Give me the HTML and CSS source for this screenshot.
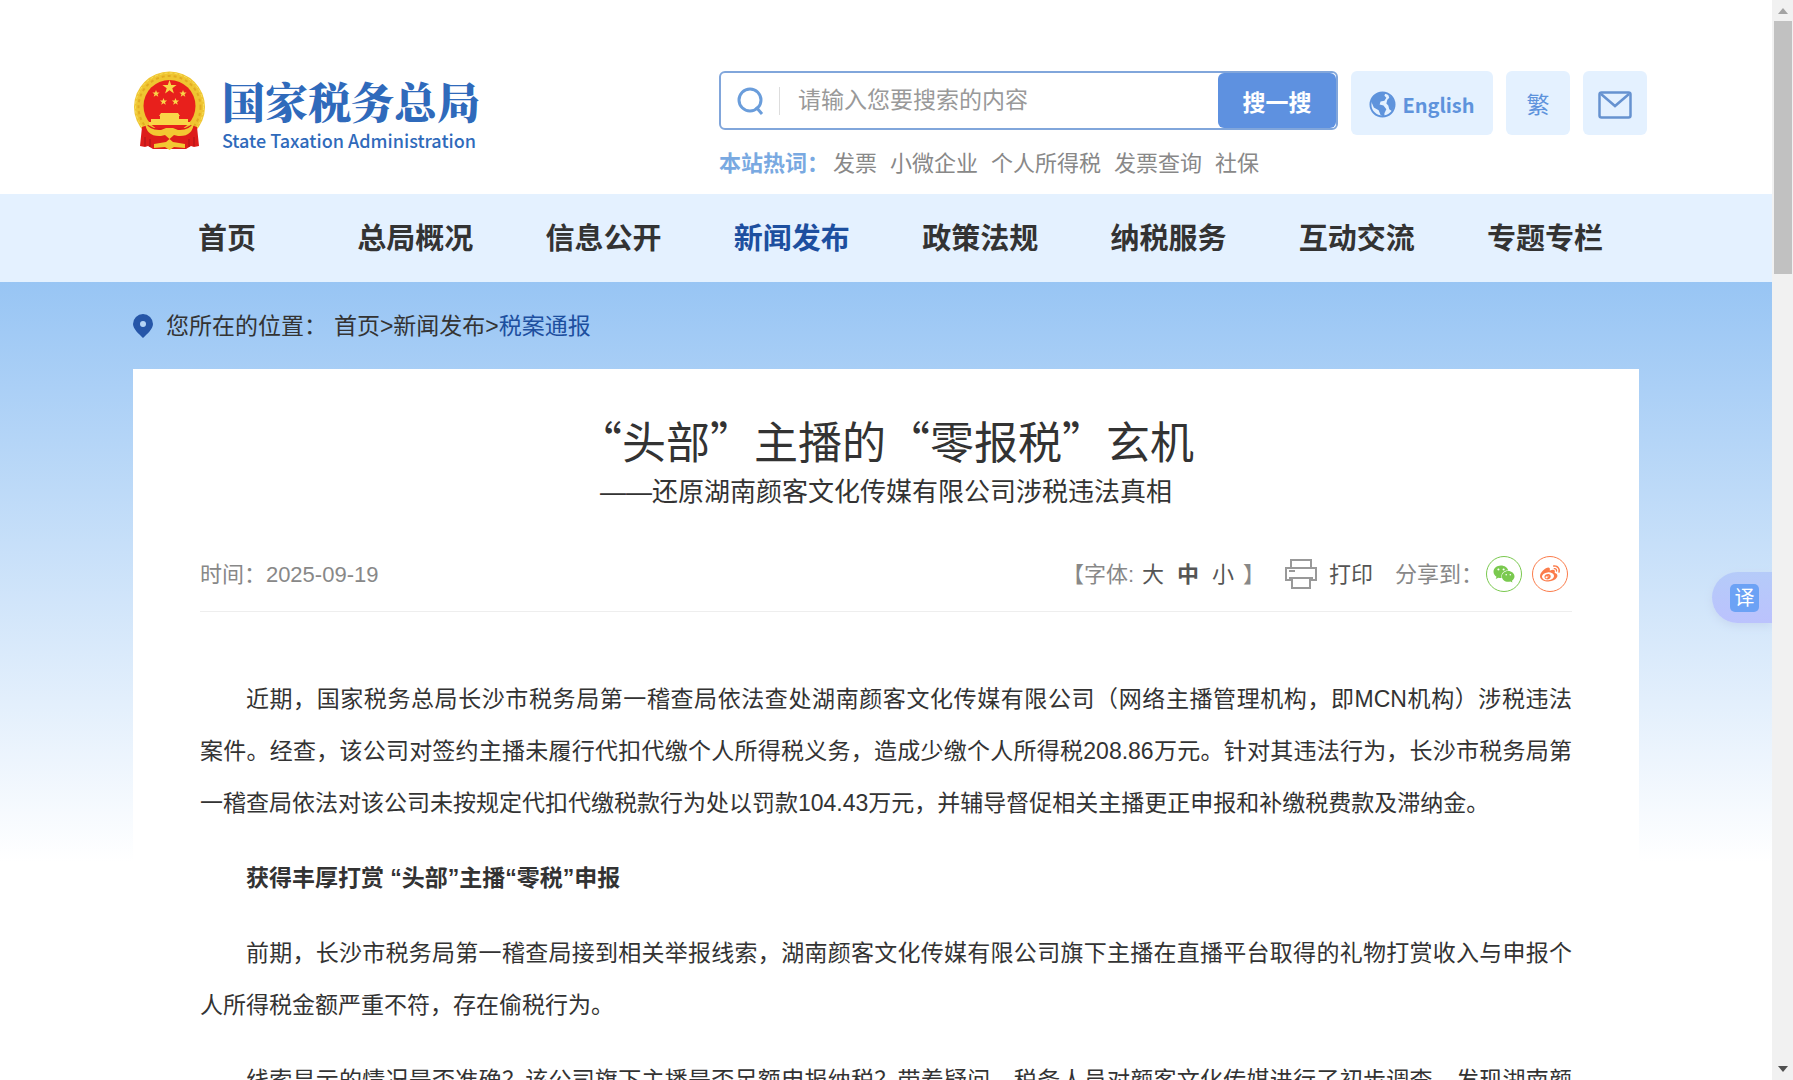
FILE: index.html
```html
<!DOCTYPE html>
<html lang="zh-CN">
<head>
    <meta charset="UTF-8">
    <meta name="viewport" content="width=device-width, initial-scale=1.0">
    <title>“头部”主播的“零报税”玄机</title>
    <link rel="stylesheet" href="styles.css">
</head>
<body>
    <header class="header">
        <a class="logo" href="#">
            <svg class="emblem" viewBox="0 0 73 79" aria-hidden="true">
                <circle cx="36.5" cy="36" r="35.5" fill="#efc531"/>
                <circle cx="36.5" cy="36" r="31" fill="none" stroke="#e2aa22" stroke-width="2" stroke-dasharray="3 3"/>
                <circle cx="36.5" cy="36" r="34" fill="none" stroke="#f8df5e" stroke-width="1" stroke-dasharray="3 2"/>
                <circle cx="36.5" cy="35" r="26" fill="#e8201c"/>
                <g fill="#f9d648">
                    <path d="M36.5 9l1.7 5.1h5.4l-4.3 3.2 1.6 5.2-4.4-3.2-4.4 3.2 1.6-5.2-4.3-3.2h5.4z"/>
                    <path d="M23 19l1 2.6h2.6l-2.1 1.6.8 2.6-2.3-1.6-2.3 1.6.8-2.6-2.1-1.600H22z"/>
                    <path d="M50 19l1 2.600h2.600l-2.100 1.600.8 2.600-2.300-1.600-2.300 1.600.8-2.600-2.100-1.600H49z"/>
                    <path d="M30.500 27l1 2.600h2.600l-2.100 1.600.8 2.600-2.300-1.600-2.300 1.600.8-2.600-2.100-1.600h2.600z"/>
                    <path d="M42.500 27l1 2.600h2.600l-2.100 1.600.8 2.600-2.300-1.600-2.300 1.600.8-2.600-2.100-1.600h2.600z"/>
                    <path d="M28 42h17l2 3h-1v3h9v3h2v3H16v-3h2v-3h9v-3h-1z"/>
                </g>
                <path d="M9 56l6-2 6 3h31l6-3 6 2 2 19-5 1-3-1-5 3H20l-5-3-3 1-5-1z" fill="#dd1c1a"/>
                <path d="M12 51q5 9 16 8l5-2h7l5 2q11 1 16-8-1 15-16 14l-4-1-4.500 4-4.500-4-4 1q-15 1-16-14z" fill="#f2c832"/>
                <path d="M21 73l12-2 3.500-3 3.500 3 12 2v4l-11-1-4.500 3-4.500-3-11 1z" fill="#f2c832"/>
                <path d="M12 66v9M17 68v8M56 68v8M61 66v9" stroke="#a91218" fill="none"/>
            </svg>
            <span class="logo-text">
                <span class="logo-cn">国家税务总局</span>
                <span class="logo-en">State Taxation Administration</span>
            </span>
        </a>
        <div class="search-area">
            <form class="search" onsubmit="return false">
                <svg class="search-icon" viewBox="0 0 28 28" aria-hidden="true">
                    <circle cx="13" cy="13" r="11" fill="none" stroke="#6a9ddb" stroke-width="3"/>
                    <path d="M19 20l6 7" stroke="#6a9ddb" stroke-width="3"/>
                </svg>
                <input class="search-input" type="text" placeholder="请输入您要搜索的内容" aria-label="搜索">
                <button class="search-button" type="submit">搜一搜</button>
            </form>
            <div class="hot">
                <strong>本站热词：</strong>
                <a href="#">发票</a>
                <a href="#">小微企业</a>
                <a href="#">个人所得税</a>
                <a href="#">发票查询</a>
                <a href="#">社保</a>
            </div>
        </div>
        <div class="tools">
            <a class="tool tool-english" href="#">
                <svg class="globe" viewBox="0 0 28 28" aria-hidden="true">
                    <circle cx="14" cy="14" r="12.5" fill="none" stroke="#5e93dc" stroke-width="2"/>
                    <path d="M2 10l4-6 6-3 5 1-1 3 2 2-2 3-4 1-1 3 4 1 3 4-2 4v4l-4-2-2-5-5-3z" fill="#5e93dc"/>
                    <path d="M20 4l4 3 3 7-3 7-3-2-1-4-2-2 1-4 2-2z" fill="#5e93dc"/>
                </svg>
                English
            </a>
            <a class="tool" href="#">繁</a>
            <a class="tool" href="#" aria-label="邮箱">
                <svg class="mail" viewBox="0 0 34 28" aria-hidden="true">
                    <rect x="1.5" y="1.5" width="31" height="25" rx="2" fill="none" stroke="#6692d0" stroke-width="2.5"/>
                    <path d="M3 3l14 12L31 3" fill="none" stroke="#6692d0" stroke-width="2.5"/>
                </svg>
            </a>
        </div>
    </header>

    <nav class="nav">
        <div class="nav-list">
            <a href="#">首页</a>
            <a href="#">总局概况</a>
            <a href="#">信息公开</a>
            <a class="active" href="#">新闻发布</a>
            <a href="#">政策法规</a>
            <a href="#">纳税服务</a>
            <a href="#">互动交流</a>
            <a href="#">专题专栏</a>
        </div>
    </nav>

    <main class="main">
        <div class="breadcrumb">
            <svg class="pin" viewBox="0 0 20 24" aria-hidden="true">
                <path d="M10 0a10 10 0 0 1 10 10c0 5-6 10-10 14C6 20 0 15 0 10A10 10 0 0 1 10 0z" fill="#2656a8"/>
                <circle cx="10" cy="10" r="3" fill="#b5d3f5"/>
            </svg>
            <span class="breadcrumb-label">您所在的位置：</span>
            <span><a href="#">首页</a>&gt;<a href="#">新闻发布</a>&gt;<a class="current" href="#">税案通报</a></span>
        </div>

        <article class="article">
            <h1>“头部”主播的“零报税”玄机</h1>
            <p class="subtitle">——还原湖南颜客文化传媒有限公司涉税违法真相</p>

            <div class="meta">
                <span class="date">时间：2025-09-19</span>
                <div class="font-size">
                    <span>【字体:</span>
                    <button type="button">大</button>
                    <button class="selected" type="button">中</button>
                    <button type="button">小</button>
                    <span>】</span>
                </div>
                <button class="print" type="button">
                    <svg class="printer" viewBox="0 0 32 30" aria-hidden="true">
                        <g fill="none" stroke="#999" stroke-width="2">
                            <path d="M6 9V1h20v8"/>
                            <path d="M6 21H1V9h30v12h-5"/>
                            <path d="M4 12h6"/>
                            <path d="M4 19h24M7 19v10h18V19"/>
                        </g>
                    </svg>
                    <span>打印</span>
                </button>
                <span class="share-label">分享到：</span>
                <a class="share wechat" href="#" aria-label="微信">
                    <svg viewBox="0 0 576 512" aria-hidden="true"><path fill="currentColor" d="M385.200 167.600c6.400 0 12.600.3 18.800 1.100C387.400 90.300 303.300 32 207.700 32 100.500 32 13 104.800 13 197.400c0 53.400 29.300 97.500 77.900 131.600l-19.300 58.600 68-34.100c24.400 4.800 43.800 9.700 68.200 9.700 6.200 0 12.100-.3 18.300-.8-4-12.900-6.200-26.600-6.200-40.800-.1-84.900 72.900-154 165.300-154zm-104.500-52.900c14.500 0 24.200 9.700 24.200 24.400 0 14.500-9.700 24.200-24.200 24.200-14.800 0-29.300-9.700-29.300-24.200.1-14.700 14.600-24.400 29.300-24.400zm-136.400 48.600c-14.500 0-29.300-9.700-29.300-24.200 0-14.800 14.800-24.400 29.300-24.400 14.800 0 24.400 9.700 24.400 24.400 0 14.600-9.600 24.200-24.400 24.200zM563 319.400c0-77.900-77.900-141.300-165.400-141.300-92.700 0-165.400 63.400-165.400 141.300S305 460.700 397.600 460.700c19.300 0 38.900-5.100 58.600-9.900l53.400 29.300-14.800-48.600C534 402.100 563 363.200 563 319.400zm-219.100-24.500c-9.500 0-19.300-9.700-19.300-19.600 0-9.700 9.800-19.300 19.300-19.300 14.800 0 24.400 9.700 24.400 19.300 0 10-9.700 19.600-24.400 19.600zm107.100 0c-9.500 0-19.300-9.700-19.300-19.600 0-9.700 9.800-19.300 19.300-19.300 14.500 0 24.400 9.700 24.400 19.300.1 10-9.900 19.600-24.400 19.600z"/></svg>
                </a>
                <a class="share weibo" href="#" aria-label="微博">
                    <svg viewBox="0 0 512 512" aria-hidden="true"><path fill="currentColor" d="M407 177.600c7.600-24-13.400-46.800-37.400-41.700-22 4.800-28.800-28.100-7.100-32.800 50.100-10.900 92.300 37.100 76.500 84.800-6.800 21.200-38.800 10.800-32-10.300zM214.800 446.700C108.500 446.700 0 395.300 0 310.400c0-44.300 28-95.400 76.300-143.700C176 67 279.500 65.800 249.900 161c-4 13.100 12.300 5.700 12.300 6 79.500-33.600 140.500-16.800 114 51.400-3.700 9.400 1.100 10.900 8.300 13.100 135.700 42.300 34.800 215.200-169.700 215.200zm143.700-146.300c-5.400-55.700-78.500-94-163.400-85.700-84.800 8.600-148.800 60.300-143.400 116s78.500 94 163.400 85.700c84.800-8.600 148.800-60.300 143.400-116zM347.900 35.100c-25.900 5.600-16.800 43.700 8.300 38.300 72.300-15.200 134.800 52.800 111.700 124-7.400 24.200 29.100 37 37.400 12 31.900-99.800-55.100-195.900-157.400-174.300zm-78.500 311c-17.100 38.800-66.800 60-109.100 46.300-40.800-13.100-58-53.400-40.300-89.700 17.700-35.400 63.100-55.400 103.400-45.100 42 10.800 63.100 50.200 46 88.500zm-86.300-30c-12.900-5.400-30 .3-38 12.900-8.300 12.900-4.300 28 8.600 34 13.100 6 30.800.3 39.100-12.900 8-13.100 3.700-28.300-9.700-34zm32.600-13.400c-5.100-1.700-11.400.6-14.300 5.400-2.900 5.100-1.400 10.600 3.700 12.900 5.100 2 11.700-.3 14.600-5.400 2.800-5.200 1.100-10.900-4-12.900z"/></svg>
                </a>
            </div>

            <div class="content">
                <p>近期，国家税务总局长沙市税务局第一稽查局依法查处湖南颜客文化传媒有限公司（网络主播管理机构，即MCN机构）涉税违法<span class="nowrap">案件。</span>经查，该公司对签约主播未履行代扣代缴个人所得税义务，造成少缴个人所得税208.86万元。针对其违法行为，长沙市税务局第一稽查局依法对该公司未按规定代扣代缴税款行为处以罚款104.43万元，并辅导督促相关主播更正申报和补缴税费款及滞纳金。</p>
                <p><strong>获得丰厚打赏 “头部”主播“零税”申报</strong></p>
                <p>前期，长沙市税务局第一稽查局接到相关举报线索，湖南颜客文化传媒有限公司旗下主播在直播平台取得的礼物打赏收入与申报个人所得税金额严重不符，存在偷税行为。</p>
                <p class="full-line">线索显示的情况是否准确？该公司旗下主播是否足额申报纳税？带着疑问，税务人员对颜客文化传媒进行了初步调查，发现湖南颜</p>
            </div>
        </article>
    </main>

    <button class="translate" type="button"><span>译</span></button>

    <div class="scrollbar" aria-hidden="true">
        <svg viewBox="0 0 10 6"><path d="M0 6l5-6 5 6z" fill="#a3a3a3"/></svg>
        <div class="thumb"></div>
        <svg viewBox="0 0 10 6"><path d="M0 0l5 6 5-6z" fill="#505050"/></svg>
    </div>
</body>
</html>
```
FILE: styles.css
```css
/* General Styling */
* {
    box-sizing: border-box;
}

body {
    margin: 0;
    padding-right: 21px;
    height: 100vh;
    overflow: hidden;
    font-family: "Liberation Sans", "Noto Sans CJK SC", sans-serif;
    font-size: 22px;
    color: #333;
    background: #fff;
    text-spacing-trim: space-all;
}

a {
    color: inherit;
    text-decoration: none;
}

button {
    padding: 0;
    border: none;
    background: none;
    font: inherit;
    color: inherit;
    cursor: pointer;
}

/* Header */
.header {
    display: flex;
    align-items: flex-start;
    height: 194px;
    margin: 0 7% 0 7.5%;
    padding-top: 71px;
}

.logo {
    display: flex;
    gap: 16px;
    flex: 0 0 586px;
    color: #2f6abb;
}

.emblem {
    width: 73px;
    height: 79px;
}

.logo-text {
    display: flex;
    flex-direction: column;
}

.logo-cn {
    font-family: "Noto Serif CJK SC", "Noto Sans CJK SC", serif;
    font-size: 43px;
    font-weight: 900;
    line-height: 60px;
}

.logo-en {
    font-family: "Noto Sans CJK SC", sans-serif;
    font-size: 18px;
    font-weight: 500;
    line-height: 18px;
}

.search-area {
    flex: 1;
}

.search {
    display: flex;
    align-items: center;
    height: 59px;
    padding-left: 16px;
    border: 2px solid #81a6db;
    border-radius: 6px;
}

.search-icon {
    width: 28px;
    height: 28px;
}

.search-input {
    flex: 1;
    min-width: 0;
    height: 28px;
    margin-left: 14px;
    padding: 0 0 0 18px;
    border: none;
    border-left: 1px solid #ddd;
    outline: none;
    font: inherit;
    font-size: 23px;
}

.search-input::placeholder {
    color: #999;
}

.search-button {
    align-self: stretch;
    width: 118px;
    border-radius: 6px;
    background: #5e91e0;
    color: #fff;
    font-size: 23px;
    font-weight: bold;
}

.hot {
    display: flex;
    gap: 13px;
    line-height: 32px;
    margin-top: 18px;
    color: #888;
    white-space: nowrap;
}

.hot strong {
    margin-right: -9px;
    color: #79a9e1;
}

.tools {
    display: flex;
    gap: 13px;
    margin: 0 1px 0 13px;
}

.tool {
    display: flex;
    align-items: center;
    justify-content: center;
    width: 64px;
    height: 64px;
    border-radius: 6px;
    background: #e4f1ff;
    color: #5e93dc;
    font-size: 23px;
}

.tool-english {
    gap: 6px;
    width: 142px;
    padding-top: 2px;
    font-family: "Noto Sans CJK SC", sans-serif;
    font-size: 20px;
    font-weight: bold;
}

.globe {
    width: 27px;
    height: 27px;
}

.mail {
    width: 34px;
    height: 28px;
    margin-top: 4px;
}

/* Navigation */
.nav {
    background: #e4f1ff;
}

.nav-list {
    display: grid;
    grid-template-columns: repeat(8, 1fr);
    width: 85%;
    margin: 0 auto;
    padding-top: 2px;
    text-align: center;
    font-size: 29px;
    font-weight: bold;
    line-height: 86px;
}

.nav .active {
    color: #1d4f9f;
}

/* Article */
.main {
    padding: 0 7.5%;
    background: linear-gradient(#98c5f4, #fff 580px);
}

.breadcrumb {
    display: flex;
    align-items: center;
    height: 87px;
    font-size: 23px;
}

.breadcrumb span {
    padding-bottom: 3px;
}

.pin {
    width: 20px;
    height: 24px;
    margin-right: 13px;
}

.breadcrumb-label {
    margin-right: 7px;
}

.breadcrumb .current {
    color: #1d4f9f;
}

.article {
    padding: 43px 67px;
    background: #fff;
}

h1 {
    margin: 0;
    font-family: "Noto Sans CJK SC", sans-serif;
    font-size: 44px;
    font-weight: normal;
    line-height: 56px;
    text-align: center;
}

.subtitle {
    margin: 4px 0 0;
    font-size: 26px;
    line-height: 40px;
    text-align: center;
}

.meta {
    display: flex;
    align-items: center;
    height: 75px;
    margin-top: 25px;
    padding-right: 4px;
    border-bottom: 1px solid #eee;
    color: #888;
}

.meta span {
    padding-bottom: 4px;
}

.date {
    margin-right: auto;
}

.font-size {
    display: flex;
    gap: 8px;
    margin-right: 20px;
}

.font-size button {
    margin-right: 5px;
    padding-bottom: 4px;
    color: #555;
}

.font-size button:last-of-type {
    margin-right: 1px;
}

.font-size .selected {
    font-weight: bold;
}

.print {
    display: flex;
    align-items: center;
    gap: 12px;
    margin-right: 22px;
    color: #555;
}

.printer {
    width: 32px;
    height: 30px;
}

.share {
    display: flex;
    align-items: center;
    justify-content: center;
    width: 36px;
    height: 36px;
    border: 1px solid;
    border-radius: 50%;
}

.share svg {
    width: 22px;
    height: 20px;
}

.wechat {
    margin: 0 10px 0 3px;
    color: #7ac94f;
}

.weibo {
    color: #fb7c4b;
}

.content {
    margin-top: 61px;
    font-size: 23px;
    line-height: 52px;
    text-align: justify;
}

.content p {
    margin: 0 0 23px;
    text-indent: 2em;
}

.nowrap {
    white-space: nowrap;
}

.full-line {
    text-align-last: justify;
}

/* Floating translate button */
.translate {
    position: fixed;
    top: 572px;
    right: 21px;
    width: 60px;
    height: 51px;
    padding-left: 18px;
    border-radius: 26px 0 0 26px;
    background: linear-gradient(#b5cbf9, #bbc2fd);
    box-shadow: 0 3px 8px #c8d8f0;
}

.translate span {
    display: block;
    width: 29px;
    border-radius: 5px;
    background: #6ca2f5;
    color: #fff;
    font-size: 20px;
    line-height: 28px;
}

/* Scrollbar */
.scrollbar {
    position: fixed;
    top: 0;
    right: 0;
    bottom: 0;
    display: flex;
    flex-direction: column;
    align-items: center;
    justify-content: space-between;
    width: 21px;
    padding: 8px 0;
    background: #f1f1f1;
}

.scrollbar svg {
    width: 10px;
    height: 6px;
}

.thumb {
    width: 18px;
    height: 253px;
    margin: 7px 0 auto;
    background: #c1c1c1;
}
```
